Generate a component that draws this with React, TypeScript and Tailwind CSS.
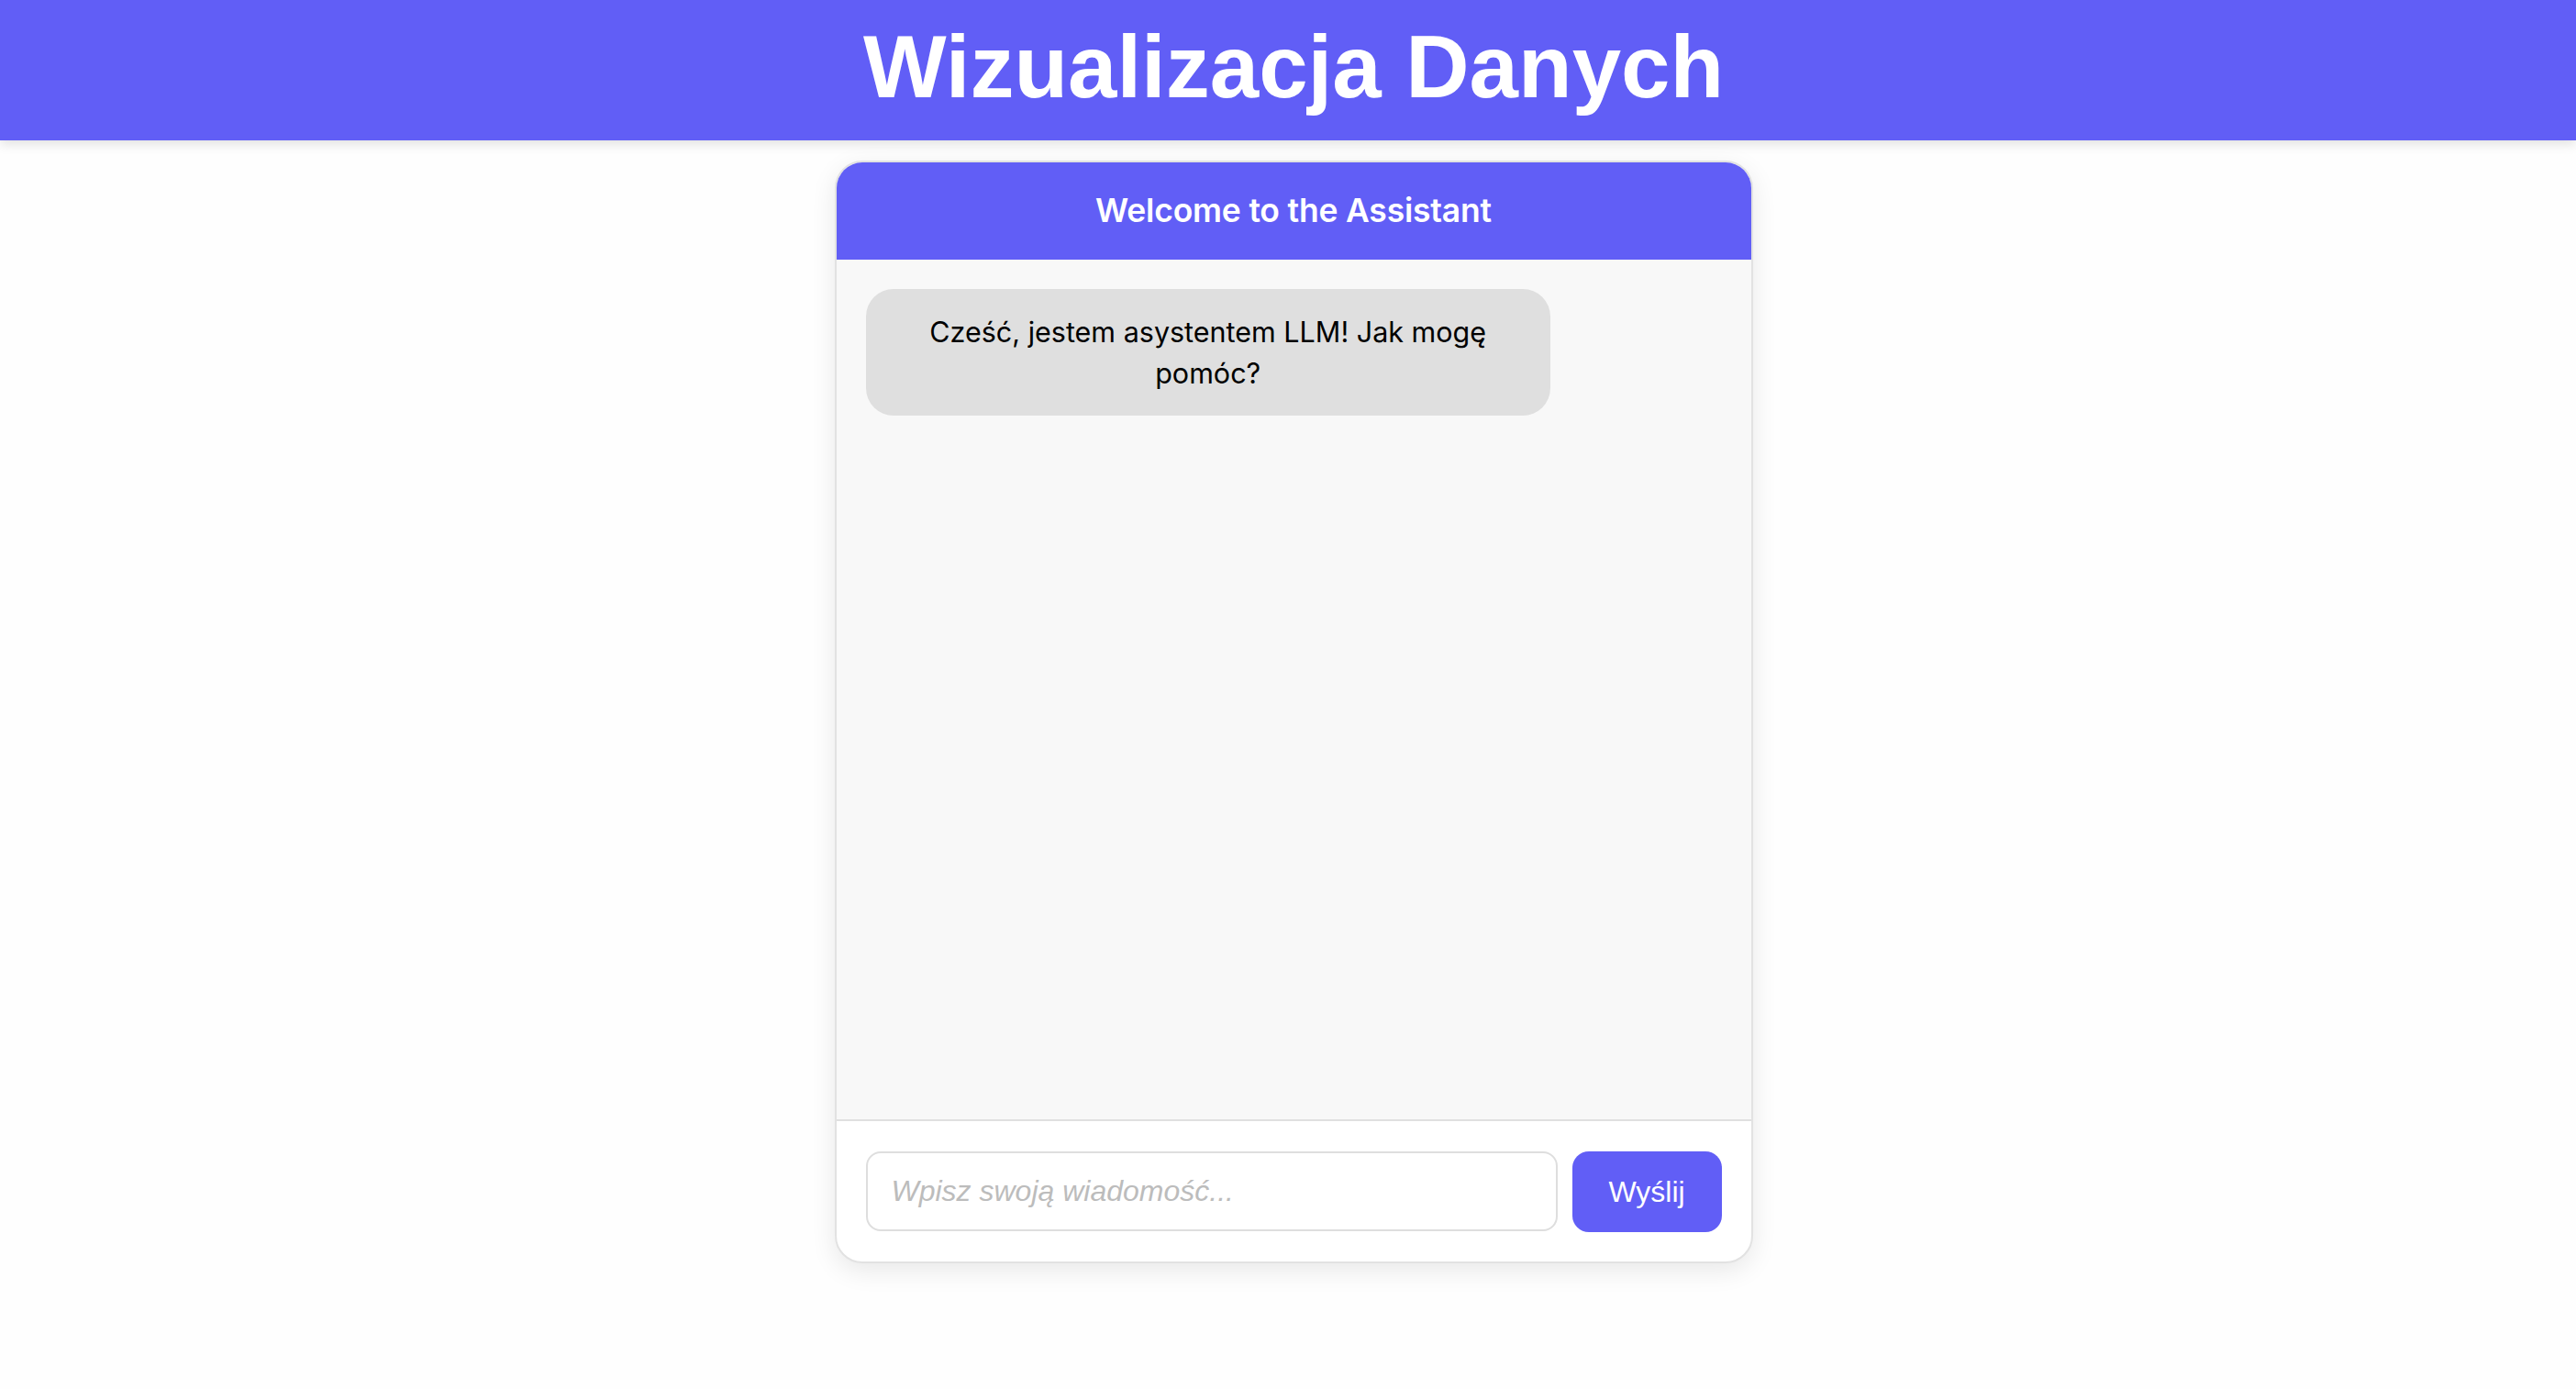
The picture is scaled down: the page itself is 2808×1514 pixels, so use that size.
import { useState } from "react";

const indigo = "bg-[#615ef6]";

export default function App() {
    const [text, setText] = useState("");

    return (
        <div className="min-h-screen bg-[#fefefe]">
            <header
                className={`${indigo} h-[153px] flex items-center justify-center pl-[12px] shadow-[0_4px_12px_rgba(0,0,0,0.12)]`}
            >
                <h1 className="text-white text-[96px] font-bold leading-none font-['Liberation_Sans',Arial,sans-serif] -mt-[8px]">
                    Wizualizacja Danych
                </h1>
            </header>

            <main className="flex justify-center pt-[22px] pl-[12px]">
                <div className="w-[1001px] h-[1202px] flex flex-col rounded-[30px] border-2 border-[#e2e2e2] bg-white overflow-hidden shadow-[0_8px_28px_rgba(0,0,0,0.09)] font-['Inter',sans-serif]">
                    <div className={`${indigo} h-[106px] shrink-0 flex items-center justify-center`}>
                        <h2 className="text-white text-[35.5px] font-semibold tracking-[-0.2px]">
                            Welcome to the Assistant
                        </h2>
                    </div>

                    <div className="flex-1 bg-[#f8f8f8] p-8">
                        <div className="max-w-[80%] bg-[#dfdfdf] rounded-[30px] px-6 py-6 text-center text-[30.5px] leading-[45px] text-black">
                            Cześć, jestem asystentem LLM! Jak mogę pomóc?
                        </div>
                    </div>

                    <div className="h-[155px] shrink-0 border-t-2 border-[#e0e0e0] flex items-center gap-4 px-8">
                        <input
                            autoFocus
                            value={text}
                            onChange={(e) => setText(e.target.value)}
                            placeholder="Wpisz swoją wiadomość..."
                            className="flex-1 h-[87px] rounded-[16px] border-2 border-[#dedede] px-[26px] text-[32px] italic outline-none placeholder:text-[#bcbcbc] font-['Liberation_Sans',Arial,sans-serif]"
                        />
                        <button
                            className={`${indigo} h-[88px] w-[163px] rounded-[18px] text-white text-[32px] font-['Liberation_Sans',Arial,sans-serif]`}
                        >
                            Wyślij
                        </button>
                    </div>
                </div>
            </main>
        </div>
    );
}
